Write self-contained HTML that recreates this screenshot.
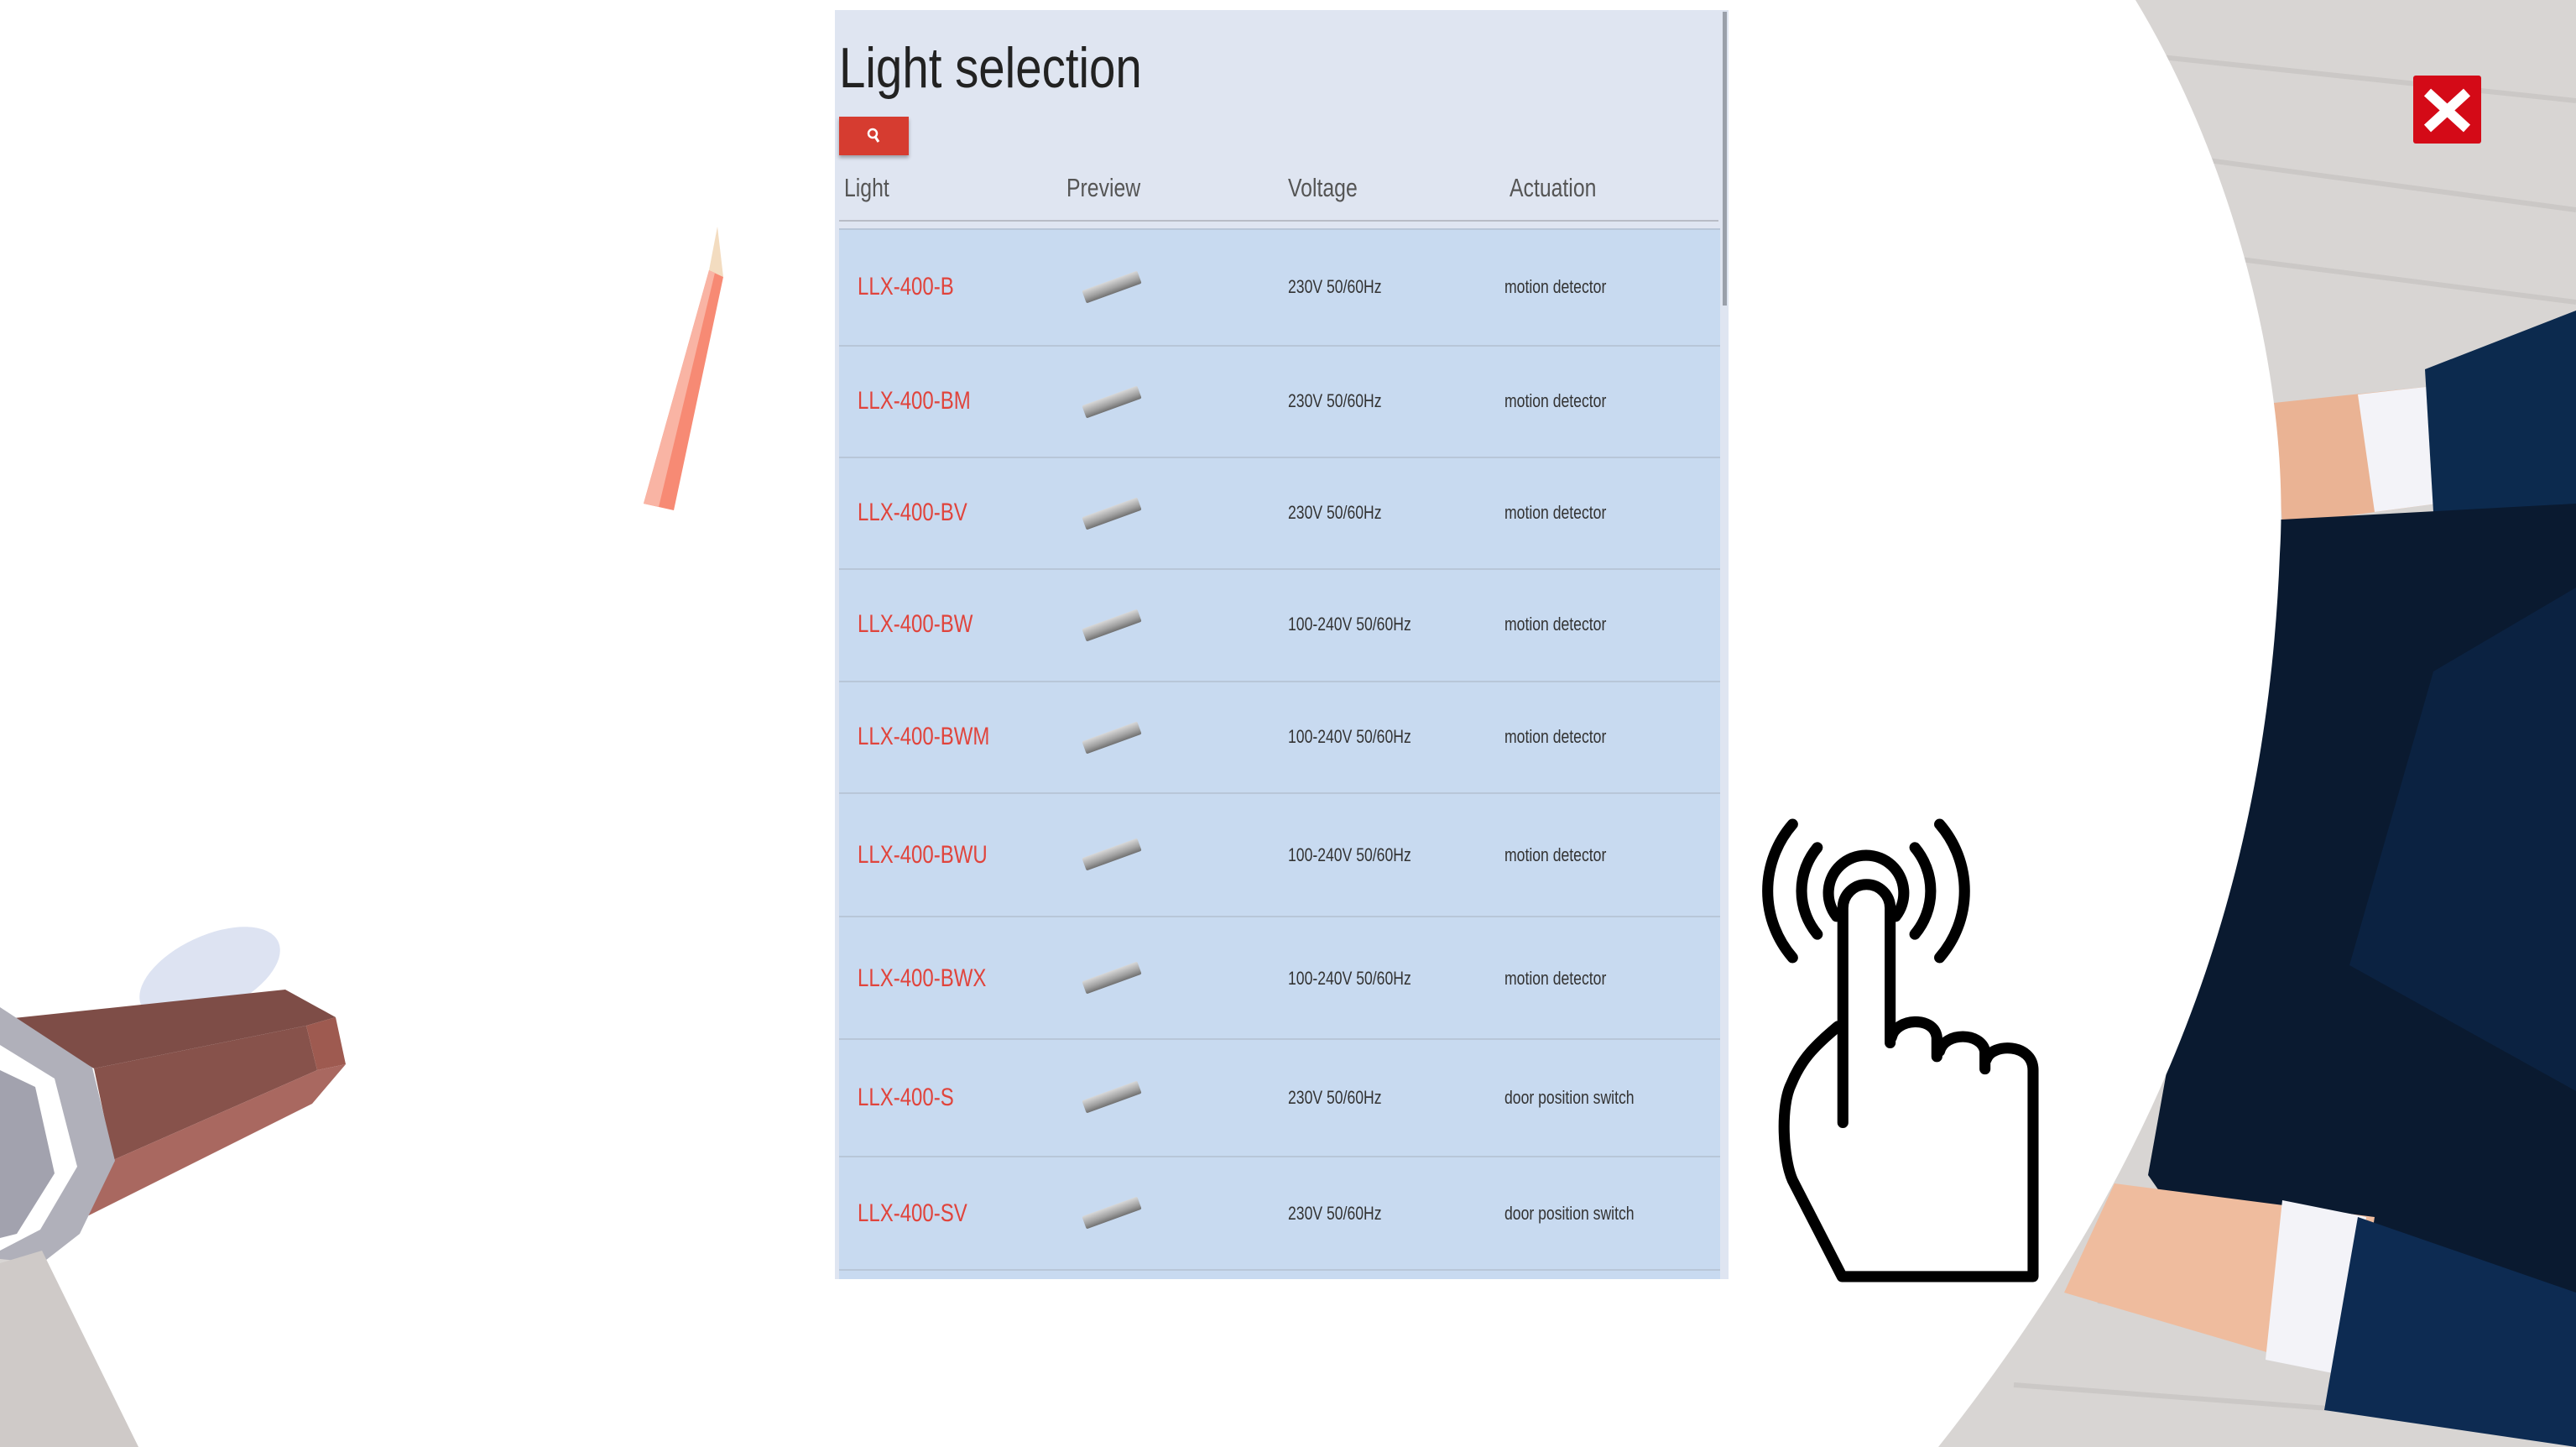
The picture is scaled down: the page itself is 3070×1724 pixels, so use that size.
<!DOCTYPE html>
<html><head><meta charset="utf-8"><style>
html,body{margin:0;padding:0;width:3070px;height:1724px;overflow:hidden;background:#fff;font-family:"Liberation Sans",sans-serif}
.abs{position:absolute}
.panel{left:995px;top:12px;width:1065px;height:1512px;background:#dfe5f1;overflow:hidden}
.c{display:inline-block;transform:scaleX(.8);transform-origin:left center;white-space:nowrap}
.title{left:5px;top:30px;font-size:68px;color:#222}
.title .c{transform:scaleX(.83)}
.btn{left:5px;top:127px;width:83px;height:46px;background:#d63c30;box-shadow:0 3px 4px rgba(0,0,0,.3)}
.hd{top:194px;font-size:31px;color:#555}
.hl{left:5px;top:250px;width:1048px;height:2px;background:#b8bcc6}
.rows{left:5px;top:260px;width:1050px}
.row{position:absolute;left:0;width:1050px;background:#c8daf0;border-top:2px solid #b8c6d8}
.nm{position:absolute;left:22px;font-size:30px;color:#e0443c}
.v{position:absolute;left:535px;font-size:22px;color:#333}
.a{position:absolute;left:793px;font-size:22px;color:#333}
.pv{position:absolute;left:290px;width:70px;height:16px;background:linear-gradient(#d8d8d8,#a0a0a0 60%,#707070);transform:rotate(-20deg);border-radius:2px}
.sb{left:2053px;top:14px;width:5px;height:350px;background:#9aa0aa}
</style></head><body>
<svg class="abs" style="left:0;top:0" width="3070" height="1724" viewBox="0 0 3070 1724">
<rect width="3070" height="1724" fill="#d8d5d3"/>
<g stroke="#c4c0be" stroke-width="6" opacity=".6">
<path d="M2500 60 L3070 120 M2550 180 L3070 250 M2600 300 L3070 360 M2500 1550 L3070 1620 M2400 1650 L3070 1700"/>
</g>
<polygon points="2710,480 2900,460 2905,600 2720,625" fill="#eab394"/>
<polygon points="2810,470 2900,460 2905,600 2830,610" fill="#f3f3f8"/>
<polygon points="2890,440 3070,370 3070,640 2900,610" fill="#0c2a4e"/>
<polygon points="2700,620 3070,600 3070,1600 2700,1600 2560,1400" fill="#0a1a30"/>
<polygon points="2900,800 3070,700 3070,1300 2800,1150" fill="#0b2241"/>
<polygon points="2520,1410 2830,1450 2800,1640 2460,1540" fill="#efbc9e"/>
<polygon points="2720,1430 2820,1450 2800,1640 2700,1620" fill="#f3f3f8"/>
<polygon points="2810,1450 3070,1540 3070,1724 2770,1680" fill="#0d2b52"/>
<path d="M0 0 L2545 0 C2660 190 2730 450 2717 660 C2700 1100 2550 1420 2310 1724 L165 1724 L50 1495 L0 1500 Z" fill="#fff"/>
<rect x="2876" y="90" width="81" height="81" rx="3" fill="#d40a17"/>
<path d="M2893 110 L2940 153 M2940 110 L2893 153" stroke="#fff" stroke-width="12"/>
<polygon points="855,270 845,322 862,330" fill="#f3dcc0"/>
<polygon points="845,322 862,330 803,608 767,600" fill="#f78a74"/>
<polygon points="845,322 852,325 785,604 767,600" fill="#f9b4a4"/>
<ellipse cx="250" cy="1160" rx="90" ry="45" fill="#dde3f2" transform="rotate(-25 250 1160)"/>
<polygon points="7,1214 340,1179 400,1212 365,1222 112,1273" fill="#7e4d47"/>
<polygon points="112,1273 365,1222 378,1275 135,1382" fill="#87524b"/>
<polygon points="365,1222 400,1212 412,1268 378,1275" fill="#9e5a50"/>
<polygon points="135,1382 378,1275 412,1268 372,1315 72,1465" fill="#a96860"/>
<polygon points="0,1200 110,1272 137,1383 95,1470 50,1505 0,1500" fill="#b0b0ba"/>
<polygon points="0,1245 65,1285 92,1390 48,1465 0,1490" fill="#fff"/>
<polygon points="0,1275 42,1295 65,1398 20,1470 0,1475" fill="#a2a2ae"/>
<polygon points="0,1505 50,1490 165,1724 0,1724" fill="#cfcac8"/>
</svg>
<svg class="abs" style="left:2082px;top:964px" width="374" height="570" viewBox="0 0 1140 1740" fill="none" stroke="#000" stroke-width="40" stroke-linecap="round" stroke-linejoin="round">
<path d="M165 55 A370 370 0 0 0 165 540"/>
<path d="M700 55 A370 370 0 0 1 700 540"/>
<path d="M255 140 A245 245 0 0 0 255 455"/>
<path d="M610 140 A245 245 0 0 1 610 455"/>
<path d="M325 390 A137 137 0 1 1 540 390"/>
<path d="M348 1140 L348 360 A86 86 0 0 1 520 360 L520 850"/>
<path d="M525 830 C540 760 680 750 690 830 L690 900"/>
<path d="M700 880 C720 810 850 810 865 880 L865 945"/>
<path d="M870 910 C890 850 1040 850 1040 950 L1040 1700 L345 1700 L165 1350 C130 1270 120 1080 160 1000 C200 900 260 850 330 790"/>
</svg>
<div class="abs panel">
<div class="abs title"><span class="c">Light selection</span></div>
<div class="abs btn"><svg width="83" height="46"><circle cx="40" cy="20" r="5" stroke="#fff" stroke-width="2.5" fill="none"/><path d="M43 24 L47 30" stroke="#fff" stroke-width="3"/></svg></div>
<div class="abs hd" style="left:11px"><span class="c">Light</span></div>
<div class="abs hd" style="left:276px"><span class="c">Preview</span></div>
<div class="abs hd" style="left:540px"><span class="c">Voltage</span></div>
<div class="abs hd" style="left:804px"><span class="c">Actuation</span></div>
<div class="abs hl"></div>
<div class="abs rows">
<div class="row" style="top:0;height:139px"><span class="nm" style="top:51px"><span class="c">LLX-400-B</span></span><div class="pv" style="top:60px"></div><span class="v" style="top:55px"><span class="c">230V 50/60Hz</span></span><span class="a" style="top:55px"><span class="c">motion detector</span></span></div>
<div class="row" style="top:139px;height:133px"><span class="nm" style="top:48px"><span class="c">LLX-400-BM</span></span><div class="pv" style="top:58px"></div><span class="v" style="top:52px"><span class="c">230V 50/60Hz</span></span><span class="a" style="top:52px"><span class="c">motion detector</span></span></div>
<div class="row" style="top:272px;height:133px"><span class="nm" style="top:48px"><span class="c">LLX-400-BV</span></span><div class="pv" style="top:58px"></div><span class="v" style="top:52px"><span class="c">230V 50/60Hz</span></span><span class="a" style="top:52px"><span class="c">motion detector</span></span></div>
<div class="row" style="top:405px;height:134px"><span class="nm" style="top:48px"><span class="c">LLX-400-BW</span></span><div class="pv" style="top:58px"></div><span class="v" style="top:52px"><span class="c">100-240V 50/60Hz</span></span><span class="a" style="top:52px"><span class="c">motion detector</span></span></div>
<div class="row" style="top:539px;height:133px"><span class="nm" style="top:48px"><span class="c">LLX-400-BWM</span></span><div class="pv" style="top:58px"></div><span class="v" style="top:52px"><span class="c">100-240V 50/60Hz</span></span><span class="a" style="top:52px"><span class="c">motion detector</span></span></div>
<div class="row" style="top:672px;height:147px"><span class="nm" style="top:56px"><span class="c">LLX-400-BWU</span></span><div class="pv" style="top:64px"></div><span class="v" style="top:60px"><span class="c">100-240V 50/60Hz</span></span><span class="a" style="top:60px"><span class="c">motion detector</span></span></div>
<div class="row" style="top:819px;height:146px"><span class="nm" style="top:56px"><span class="c">LLX-400-BWX</span></span><div class="pv" style="top:64px"></div><span class="v" style="top:60px"><span class="c">100-240V 50/60Hz</span></span><span class="a" style="top:60px"><span class="c">motion detector</span></span></div>
<div class="row" style="top:965px;height:140px"><span class="nm" style="top:52px"><span class="c">LLX-400-S</span></span><div class="pv" style="top:60px"></div><span class="v" style="top:56px"><span class="c">230V 50/60Hz</span></span><span class="a" style="top:56px"><span class="c">door position switch</span></span></div>
<div class="row" style="top:1105px;height:135px"><span class="nm" style="top:50px"><span class="c">LLX-400-SV</span></span><div class="pv" style="top:58px"></div><span class="v" style="top:54px"><span class="c">230V 50/60Hz</span></span><span class="a" style="top:54px"><span class="c">door position switch</span></span></div>
<div class="row" style="top:1240px;height:40px"></div>
</div>
</div>
<div class="abs sb"></div>
</body></html>
